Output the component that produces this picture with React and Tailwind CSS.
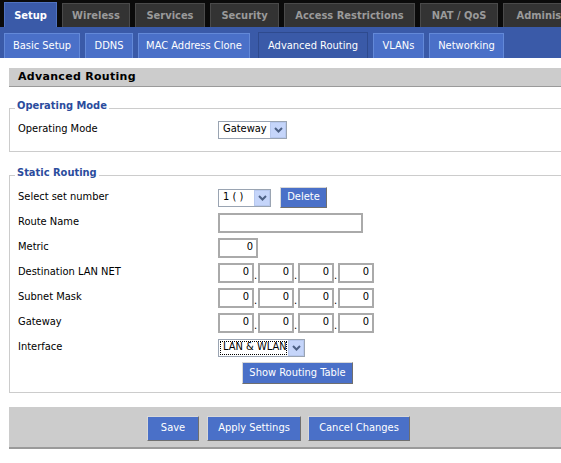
import React from "react";

const Chevron = () => (
  <svg width="9" height="6" viewBox="0 0 9 6">
    <path d="M1 1 L4.5 4.5 L8 1" fill="none" stroke="#4d6185" strokeWidth="2" />
  </svg>
);

function Select({ text, w, focus }) {
  return (
    <div className={`flex h-[18px] border border-[#9aa4b2] bg-white ${w}`}>
      <div className="flex-1 min-w-0 flex items-center pl-[1px] pr-[1px]">
        <div
          className={`h-[14px] flex items-center pl-[2px] pr-[1px] w-full whitespace-nowrap overflow-hidden ${
            focus ? "border border-dotted border-black" : "border border-transparent"
          }`}
        >
          {text}
        </div>
      </div>
      <div className="w-[16px] shrink-0 h-full border border-[#b7c8ee] bg-[#c5d5fa] flex items-center justify-center">
        <Chevron />
      </div>
    </div>
  );
}

function Input({ w, value }) {
  return (
    <div
      className={`h-[20px] border-2 border-[#aaaaaa] bg-white flex items-center justify-end pr-[3px] ${w}`}
    >
      {value}
    </div>
  );
}

function Btn({ children, w, h }) {
  return (
    <div
      className={`flex items-center justify-center whitespace-nowrap bg-[#4a70c8] text-white border border-t-[#d8d8d8] border-l-[#d8d8d8] border-r-[#6f6f6f] border-b-[#6f6f6f] ${w} ${h}`}
    >
      {children}
    </div>
  );
}

function Row({ label, children }) {
  return (
    <div className="flex items-center h-[25px] pl-[3px]">
      <div className="w-[200px]">{label}</div>
      <div className="flex items-center">{children}</div>
    </div>
  );
}

function IP() {
  return (
    <div className="flex items-end">
      <Input w="w-[36px]" value="0" />
      <span className="w-[4px] leading-[14px]">.</span>
      <Input w="w-[36px]" value="0" />
      <span className="w-[4px] leading-[14px]">.</span>
      <Input w="w-[36px]" value="0" />
      <span className="w-[4px] leading-[14px]">.</span>
      <Input w="w-[36px]" value="0" />
    </div>
  );
}

export default function App() {
  const tabs = [
    ["Wireless", "w-[68px]"],
    ["Services", "w-[70px]"],
    ["Security", "w-[69px]"],
    ["Access Restrictions", "w-[131px]"],
    ["NAT / QoS", "w-[78px]"],
    ["Administration", "w-[110px]"],
  ];
  const subs = [
    ["Basic Setup", "w-[76px]", false],
    ["DDNS", "w-[48px]", false],
    ["MAC Address Clone", "w-[112px]", false],
    ["Advanced Routing", "w-[110px] ml-[3px]", true],
    ["VLANs", "w-[51px]", false],
    ["Networking", "w-[75px]", false],
  ];
  return (
    <div className="w-[561px] h-[463px] overflow-hidden bg-white text-black text-[11px] font-['DejaVu_Sans_Condensed','Liberation_Sans',sans-serif]">
      {/* top tabs */}
      <div className="h-[27px] bg-[#0a0a0a] flex items-end pl-[4px] gap-[5px] w-[700px]">
        <div className="h-[25px] w-[53px] shrink-0 bg-[#3a5aa8] border border-b-0 border-[#5072c0] text-white font-bold text-[11px] flex items-center justify-center pt-[2px]">
          Setup
        </div>
        {tabs.map(([t, w]) => (
          <div
            key={t}
            className={`h-[24px] shrink-0 bg-[#333333] border border-b-0 border-[#4a4a4a] text-[#9a9a9a] font-bold flex items-center justify-center pt-[2px] ${w}`}
          >
            {t}
          </div>
        ))}
      </div>
      {/* sub tabs */}
      <div className="h-[31px] bg-[#3a5aa8] flex items-end pl-[4px] gap-[5px]">
        {subs.map(([t, w, a]) => (
          <div
            key={t}
            className={`shrink-0 flex items-center justify-center text-white pt-[1px] ${w} ${
              a
                ? "h-[26px] bg-[#3a5aa8] border border-b-0 border-[#2e4a8e]"
                : "h-[25px] bg-[#4a70c8] border border-b-0 border-[#6389d8]"
            }`}
          >
            {t}
          </div>
        ))}
      </div>

      {/* content */}
      <div className="pl-[9px] w-[586px] pt-[10px]">
        <div className="h-[19px] bg-[#cccccc] border-b border-[#9a9a9a] flex items-center pl-[9px] font-bold font-['DejaVu_Sans','Liberation_Sans',sans-serif] text-[11px] tracking-[0.3px]">
          Advanced Routing
        </div>

        <fieldset className="mt-[12px] border border-[#cccccc] pl-[5px] pb-[9px]">
          <legend className="px-[2px] leading-[14px] pb-[4px] text-[#2b4c9d] font-bold">
            Operating Mode
          </legend>
          <Row label="Operating Mode">
            <Select text="Gateway" w="w-[69px]" />
          </Row>
        </fieldset>

        <fieldset className="mt-[14px] border border-[#cccccc] pl-[5px] pt-[1px] pb-[8px]">
          <legend className="px-[2px] leading-[14px] pb-[4px] text-[#2b4c9d] font-bold">
            Static Routing
          </legend>
          <Row label="Select set number">
            <Select text="1 ( )" w="w-[53px]" />
            <div className="ml-[9px]">
              <Btn w="w-[47px]" h="h-[21px]">Delete</Btn>
            </div>
          </Row>
          <Row label="Route Name">
            <Input w="w-[145px]" value="" />
          </Row>
          <Row label="Metric">
            <Input w="w-[40px]" value="0" />
          </Row>
          <Row label="Destination LAN NET">
            <IP />
          </Row>
          <Row label="Subnet Mask">
            <IP />
          </Row>
          <Row label="Gateway">
            <IP />
          </Row>
          <Row label="Interface">
            <Select text="LAN & WLAN" w="w-[87px]" focus />
          </Row>
          <div className="mt-[2px] pl-[227px]">
            <Btn w="w-[111px]" h="h-[22px]">Show Routing Table</Btn>
          </div>
        </fieldset>

        <div className="mt-[14px] h-[42px] bg-[#cccccc] border-b-2 border-[#9a9a9a] flex items-start pt-[9px] pl-[138px]">
          <Btn w="w-[52px]" h="h-[25px]">Save</Btn>
          <div className="ml-[8px]">
            <Btn w="w-[94px]" h="h-[25px]">Apply Settings</Btn>
          </div>
          <div className="ml-[7px]">
            <Btn w="w-[102px]" h="h-[25px]">Cancel Changes</Btn>
          </div>
        </div>
      </div>
    </div>
  );
}
